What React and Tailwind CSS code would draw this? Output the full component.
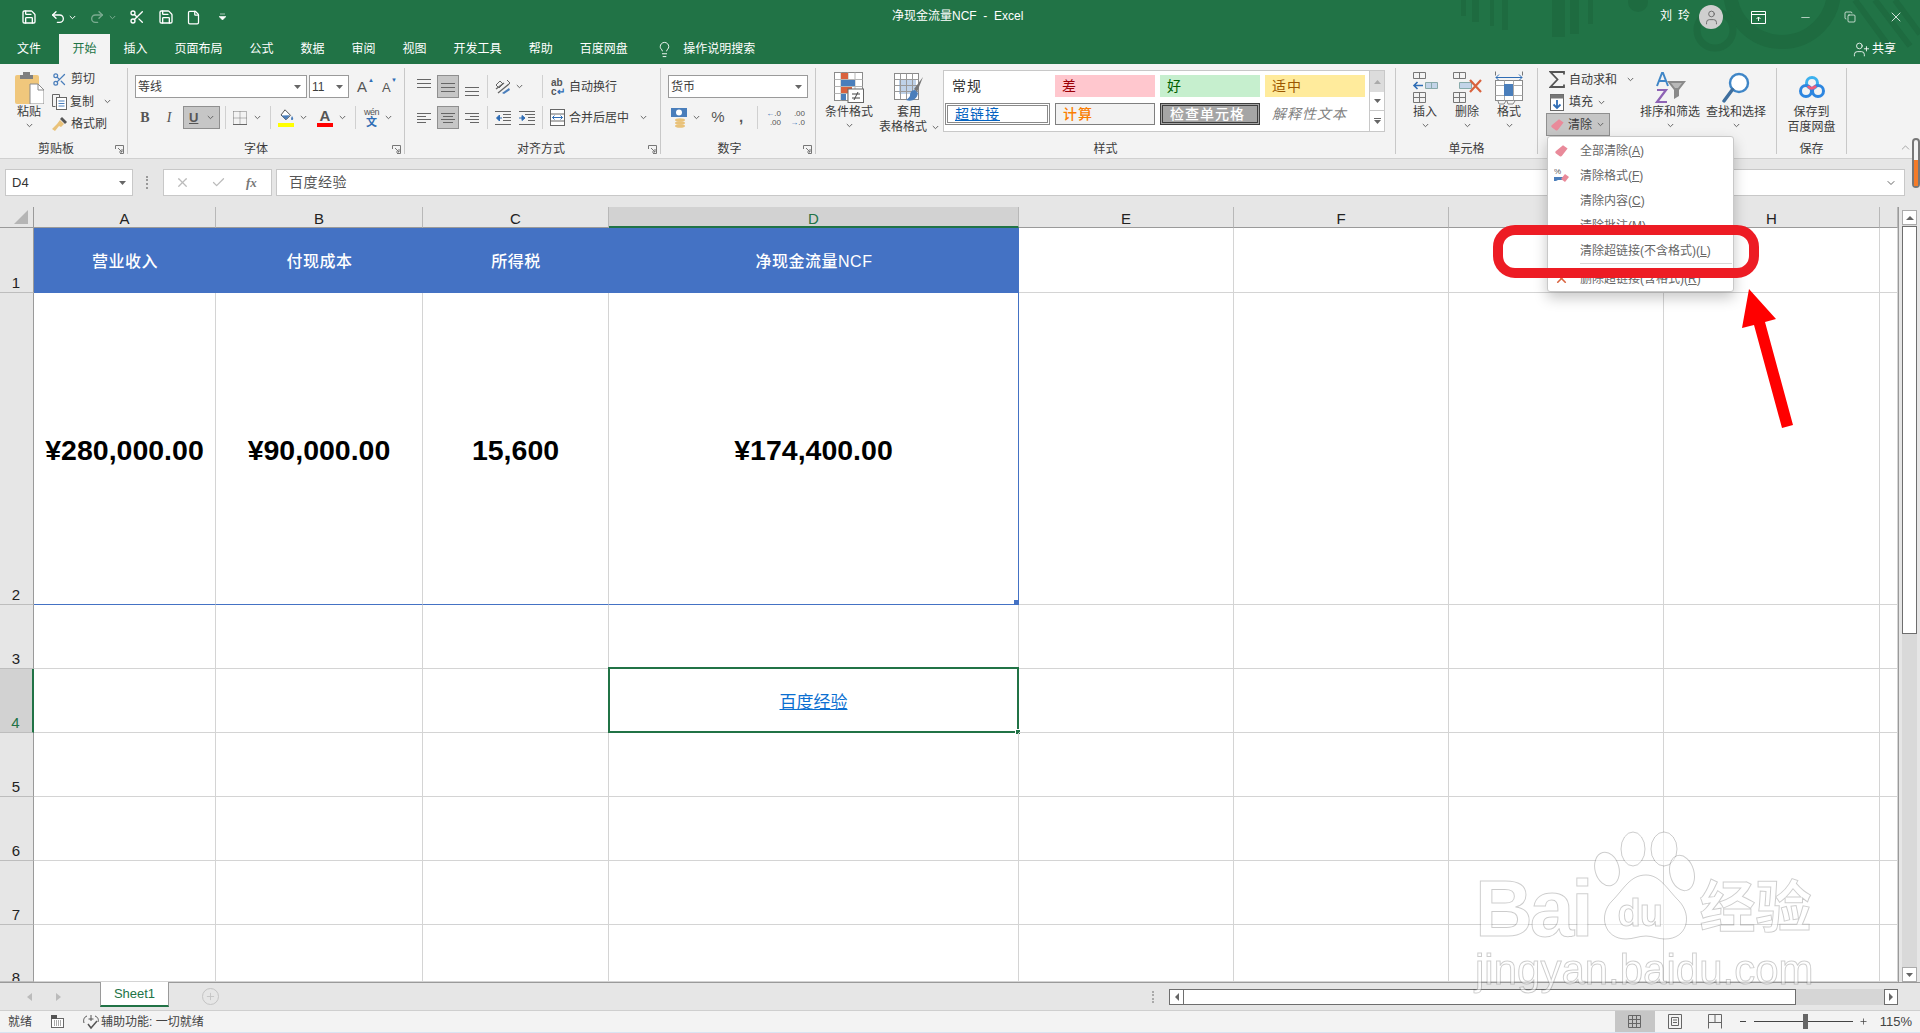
import { Save, Undo2, Redo2, Scissors, File, Lightbulb, X, Check, Minus, UserPlus, User, Copy, Plus, ChevronUp, ChevronDown } from 'lucide-react';

const Chev = ({ className = '' }) => (
  <svg width="7" height="5" viewBox="0 0 7 5" className={`shrink-0 ${className}`}>
    <path d="M.8 1l2.7 2.7L6.2 1" fill="none" stroke="#666" strokeWidth="1" />
  </svg>
);

const Caret = ({ className = '' }) => (
  <svg width="7" height="4" viewBox="0 0 7 4" className={`shrink-0 ${className}`}>
    <path d="M0 0h7L3.5 4z" fill="#666" />
  </svg>
);

const Lines = ({ rows, className = '' }) => (
  <svg width="14" height="14" viewBox="0 0 14 14" className={`shrink-0 ${className}`}>
    {rows.map(([x1, x2, y]) => (
      <path key={y} d={`M${x1} ${y}.5H${x2}`} stroke="#666" strokeWidth="1" />
    ))}
  </svg>
);

const Eraser = ({ className = '' }) => (
  <svg width="15" height="14" viewBox="0 0 15 14" className={`shrink-0 ${className}`}>
    <path d="M9 1.2l4.6 3.4-5.6 7.2c-.6.8-1.4.9-2.2.4L2 9.4c-.8-.6-.9-1.4-.3-2.2z" fill="#e98a9a" />
  </svg>
);

const Launcher = () => (
  <svg width="9" height="9" viewBox="0 0 9 9" className="absolute right-[3px] bottom-[0px]">
    <path d="M.5 4V.5h8v8H5M3 3l4 4M7 4v3H4" fill="none" stroke="#777" strokeWidth="1" />
  </svg>
);

const Group = ({ className, labelClass = '', label, launcher, children }) => (
  <div className={`relative h-[86px] shrink-0 flex flex-col border-r border-[#c8c8c8] ${className}`}>
    <div className="h-[73px] shrink-0">{children}</div>
    <div className={`h-[13px] leading-[17px] text-center ${labelClass}`}>{label}</div>
    {launcher && <Launcher />}
  </div>
);

const Large = ({ className = '', icon, lines, chevron = true }) => (
  <div className={`flex flex-col items-center shrink-0 ${className}`}>
    <div className="h-[37px] flex items-center justify-center pt-[2px]">{icon}</div>
    {lines.map((l) => (
      <span key={l} className="leading-[15px] whitespace-nowrap">{l}</span>
    ))}
    {chevron && <Chev className="mt-[3px]" />}
  </div>
);

const Sep = ({ className = '' }) => <div className={`w-px h-[23px] bg-[#d0d0d0] shrink-0 ${className}`} />;

const Select = ({ className, children }) => (
  <div className={`h-[23px] bg-white border border-[#9a9a9a] flex items-center justify-between pl-[2px] pr-[5px] shrink-0 ${className}`}>
    <span className="text-[12px]">{children}</span>
    <Caret />
  </div>
);

const PasteIcon = () => (
  <svg width="29" height="32" viewBox="0 0 29 32">
    <rect x="0" y="3" width="24" height="29" rx="2" fill="#f0c77c" />
    <path d="M8 3V0h7v3h3v4H5V3z" fill="#7f7f7f" />
    <path d="M15 12h8l6 6v14H15z" fill="#fff" stroke="#8a8a8a" />
    <path d="M23 12v6h6" fill="none" stroke="#8a8a8a" />
  </svg>
);

const CopyIcon = () => (
  <svg width="15" height="16" viewBox="0 0 15 16">
    <path d="M.5.5h7v3M.5.5v12h3" fill="none" stroke="#666" />
    <rect x="4.5" y="3.5" width="10" height="12" fill="#fff" stroke="#666" />
    <path d="M6.5 7h6M6.5 9.5h6M6.5 12h6" stroke="#4a7ebb" />
  </svg>
);

const Brush = () => (
  <svg width="16" height="16" viewBox="0 0 16 16">
    <path d="M10 1l5 5-2 2-5-5z" fill="#555" />
    <path d="M8 4l4 4-3 3-2-1-4 5-3-2 5-5z" fill="#e9c27a" />
  </svg>
);

const BorderIcon = () => (
  <svg width="14" height="14" viewBox="0 0 14 14">
    <path d="M.5.5h13v13M.5.5v13M7 .5v13M.5 7h13" fill="none" stroke="#777" strokeDasharray="1 1" />
    <path d="M0 13.5h14" stroke="#666" />
  </svg>
);

const FillIcon = () => (
  <div className="w-[16px] flex flex-col items-center">
    <svg width="15" height="13" viewBox="0 0 15 13">
      <path d="M6 .8l5.5 5.5-4.5 4.5L2 6z" fill="#fff" stroke="#555" />
      <path d="M2.5 6.5l8.5-.2-4 4.5z" fill="#4a7ebb" />
      <path d="M13 7c1 1.6 1.6 2.5 1 3.5s-2 .6-2-.6c0-.9.5-1.8 1-2.9z" fill="#4a7ebb" />
    </svg>
    <div className="w-[16px] h-[4px] bg-[#ffff00] mt-[1px]" />
  </div>
);

const FontColor = () => (
  <div className="w-[16px] flex flex-col items-center">
    <span className="font-bold text-[15px] leading-[13px] text-[#555]">A</span>
    <div className="w-[16px] h-[4px] bg-[#ff0000] mt-[1px]" />
  </div>
);

const Wen = () => (
  <div className="w-[15px] flex flex-col items-center leading-none">
    <span className="text-[9px] tracking-tighter text-[#555]">wén</span>
    <span className="text-[11px] text-[#2f6db5] font-bold">文</span>
  </div>
);

const Orient = () => (
  <svg width="17" height="16" viewBox="0 0 17 16">
    <path d="M1 10l8-6M3 14l11-9" stroke="#666" strokeWidth="1.3" />
    <path d="M12 1l3 3-3 3M1 6l4-4 3 3-4 4z" fill="none" stroke="#666" />
    <path d="M7 14l7-5 1 2-6 4z" fill="#4a7ebb" />
  </svg>
);

const WrapIcon = () => (
  <div className="w-[14px] leading-[9px] text-[10px] text-[#555] font-semibold">
    ab<br />c<span className="text-[#2f6db5]">↵</span>
  </div>
);

const IndentIcon = ({ flip }) => (
  <svg width="16" height="14" viewBox="0 0 16 14" className="shrink-0">
    <path d={flip ? 'M6 3.5h10M9 6.5h7M9 9.5h7M0 .5h16M0 13.5h16' : 'M0 .5h16M0 13.5h16M8 3.5h8M8 6.5h8M8 9.5h8'} stroke="#666" />
    <path d={flip ? 'M0 7h5M3 4.5L6 7l-3 2.5z' : 'M2 7h5M4.5 4L1.5 7l3 3z'} fill="#2f6db5" stroke="#2f6db5" />
  </svg>
);

const MergeIcon = () => (
  <svg width="15" height="17" viewBox="0 0 15 17" className="shrink-0">
    <rect x=".5" y=".5" width="14" height="16" fill="#fff" stroke="#666" />
    <path d="M.5 5h14M.5 12h14" stroke="#666" />
    <path d="M2.5 8.5h10M4.5 6.5l-2 2 2 2M10.5 6.5l2 2-2 2" fill="none" stroke="#2f6db5" />
  </svg>
);

const CurrencyIcon = () => (
  <svg width="17" height="20" viewBox="0 0 17 20" className="shrink-0">
    <rect x="0" y="0" width="16" height="9" fill="#4a7ebb" />
    <circle cx="8" cy="4.5" r="3" fill="#fff" />
    <ellipse cx="9" cy="12" rx="5" ry="1.8" fill="#e9c27a" />
    <ellipse cx="9" cy="15" rx="5" ry="1.8" fill="#e9c27a" />
    <ellipse cx="9" cy="18" rx="5" ry="1.8" fill="#e9c27a" />
  </svg>
);

const DecUp = () => (
  <div className="w-[16px] text-[8px] leading-[9px] text-right text-[#555]">
    <div><span className="text-[#2f6db5] font-bold">←</span>.0</div>
    <div>.00</div>
  </div>
);

const DecDown = () => (
  <div className="w-[16px] text-[8px] leading-[9px] text-right text-[#555]">
    <div>.00</div>
    <div><span className="text-[#2f6db5] font-bold">→</span>.0</div>
  </div>
);

const CondIcon = () => (
  <svg width="30" height="31" viewBox="0 0 30 31">
    <rect x=".5" y=".5" width="28" height="28" fill="#fff" stroke="#8a8a8a" />
    <path d="M7 .5v28M14 .5v28M21 .5v28M.5 7.5h28M.5 14.5h28M.5 21.5h28" stroke="#b5b5b5" />
    <rect x="7" y="1" width="7" height="6" fill="#d9623d" />
    <rect x="7" y="8" width="14" height="6" fill="#4a7ebb" />
    <rect x="7" y="15" width="11" height="6" fill="#d9623d" />
    <rect x="7" y="22" width="5" height="6" fill="#4a7ebb" />
    <rect x="14" y="17" width="15.5" height="13.5" fill="#fff" stroke="#666" />
    <path d="M18 22h8M18 26h8M24 20l-4 8" stroke="#444" fill="none" />
  </svg>
);

const TableIcon = () => (
  <svg width="30" height="30" viewBox="0 0 30 30">
    <rect x=".5" y=".5" width="24" height="26" fill="#fff" stroke="#8a8a8a" />
    <rect x="5" y="6" width="17" height="15" fill="#bfd2e8" />
    <path d="M6.5.5v26M12.5.5v26M18.5.5v26M.5 6.5h24M.5 12.5h24M.5 18.5h24" stroke="#9a9a9a" />
    <path d="M29 4L20 16l3 3z" fill="#777" />
    <path d="M21 17c-4 0-5 3-5 6-1 2-3 3-4 4 5 2 11 0 12-7z" fill="#4a7ebb" />
  </svg>
);

const InsertIcon = () => (
  <svg width="26" height="31" viewBox="0 0 26 31">
    <path d="M1.5.5h12v6h-12zM7.5.5v6" fill="none" stroke="#777" />
    <path d="M13.5 10.5h12v6h-12z" fill="#c3d4e8" stroke="#8aa" />
    <path d="M19.5 10.5v6" stroke="#8aa" />
    <path d="M2 13.5h9M5.5 10L2 13.5 5.5 17" fill="none" stroke="#2f6db5" strokeWidth="1.6" />
    <path d="M1.5 20.5h12v10h-12zM7.5 20.5v10M1.5 25.5h12" fill="none" stroke="#777" />
  </svg>
);

const DeleteIcon = () => (
  <svg width="31" height="31" viewBox="0 0 31 31">
    <path d="M1.5.5h12v6h-12zM7.5.5v6" fill="none" stroke="#777" />
    <path d="M7.5 10.5h12v6h-12z" fill="#c3d4e8" stroke="#8aa" />
    <path d="M1.5 20.5h12v10h-12zM7.5 20.5v10M1.5 25.5h12" fill="none" stroke="#777" />
    <path d="M18 8l11 12M29 8L18 20" stroke="#d9623d" strokeWidth="2.2" fill="none" />
  </svg>
);

const FormatIcon = () => (
  <svg width="28" height="34" viewBox="0 0 28 34">
    <path d="M1 6.5h26M4 3.5L1 6.5l3 3M24 3.5l3 3-3 3" fill="none" stroke="#2f6db5" />
    <path d="M.5 .5v4M27.5 .5v4" stroke="#777" />
    <rect x=".5" y="9.5" width="27" height="20" fill="#fff" stroke="#8a8a8a" />
    <path d="M9.5 9.5v20M18.5 9.5v20M.5 14.5h27M.5 24.5h27" stroke="#aaa" />
    <rect x="9" y="13" width="9" height="12" fill="#4a7ebb" />
    <path d="M3 30l1 3h5l2-3M12 30l1 3h5l2-3" fill="none" stroke="#888" />
  </svg>
);

const SigmaIcon = () => (
  <svg width="16" height="17" viewBox="0 0 16 17" className="shrink-0">
    <path d="M15 3.5V1H1.5l7 7.5-7 7.5H15v-2.5" fill="none" stroke="#555" strokeWidth="1.8" />
  </svg>
);

const FillDown = () => (
  <svg width="14" height="17" viewBox="0 0 14 17" className="shrink-0">
    <rect x=".5" y=".5" width="13" height="16" fill="#fff" stroke="#666" />
    <rect x=".5" y=".5" width="13" height="4" fill="#777" />
    <path d="M7 6v8M3.5 10.5L7 14l3.5-3.5" fill="none" stroke="#2f6db5" strokeWidth="1.8" />
  </svg>
);

const SortIcon = () => (
  <svg width="32" height="33" viewBox="0 0 32 33">
    <path d="M3 15L8 2h1l5 13M5 10h7" fill="none" stroke="#3f86c7" strokeWidth="2" />
    <path d="M3 19h9L3 31h10" fill="none" stroke="#8e63b5" strokeWidth="2.2" />
    <path d="M13 10h19l-7 9v6l-5 3v-9z" fill="#8a8a8a" />
    <path d="M17 12h11l-4 5h-3z" fill="#b8b8b8" />
  </svg>
);

const FindIcon = () => (
  <svg width="28" height="32" viewBox="0 0 28 32">
    <circle cx="17" cy="11" r="9" fill="#fff" stroke="#3f86c7" strokeWidth="2.4" />
    <path d="M10.5 17.5L2 29" stroke="#3f6f9e" strokeWidth="3.4" strokeLinecap="round" />
  </svg>
);

const BaiduDisk = () => (
  <svg width="26" height="23" viewBox="0 0 26 23">
    <circle cx="13" cy="7" r="5.5" fill="none" stroke="#3db1ee" strokeWidth="3" />
    <circle cx="7" cy="15" r="5.5" fill="none" stroke="#2d86e0" strokeWidth="3" />
    <circle cx="19" cy="15" r="5.5" fill="none" stroke="#2d86e0" strokeWidth="3" />
    <path d="M9 10c2 3 5 3 8 0" fill="none" stroke="#ef5b7b" strokeWidth="3" />
  </svg>
);

const TitleBar = () => (
  <div className="relative h-[34px] shrink-0 flex items-center text-white">
    <svg width="460" height="64" viewBox="0 0 460 64" className="absolute left-[1460px] top-0">
      <g fill="#1e6b40">
        <rect x="1" width="5" height="16" />
        <rect x="12" width="7" height="22" />
        <rect x="30" width="4" height="26" />
        <rect x="42" width="6" height="30" />
        <rect x="92" width="13" height="37" />
        <rect x="110" width="9" height="34" />
        <rect x="128" width="5" height="24" />
        <circle cx="178" cy="2" r="10" />
      </g>
      <g fill="none" stroke="#1e6b40">
        <circle cx="322" cy="-10" r="52" strokeWidth="14" />
        <circle cx="255" cy="30" r="18" strokeWidth="7" />
        <path d="M395 0l38 52M415 0l35 46M435 0l25 34" strokeWidth="6" />
      </g>
    </svg>
    <div className="relative w-[892px] shrink-0 flex items-center">
      <Save size={16} className="ml-[21px]" />
      <Undo2 size={16} className="ml-[13px]" />
      <svg width="7" height="5" viewBox="0 0 7 5" className="ml-[3px]"><path d="M.8 1l2.7 2.7L6.2 1" fill="none" stroke="#fff" /></svg>
      <Redo2 size={16} className="ml-[13px] opacity-40" />
      <svg width="7" height="5" viewBox="0 0 7 5" className="ml-[4px] opacity-40"><path d="M.8 1l2.7 2.7L6.2 1" fill="none" stroke="#fff" /></svg>
      <Scissors size={16} className="ml-[13px]" />
      <Save size={16} className="ml-[13px]" />
      <File size={15} className="ml-[12px]" />
      <svg width="7" height="8" viewBox="0 0 7 8" className="ml-[18px]"><path d="M1 1h5M0 3.5h7L3.5 7z" fill="#fff" stroke="#fff" strokeWidth=".6" /></svg>
    </div>
    <span className="relative text-[12px] pb-[3px]">净现金流量NCF&nbsp;&nbsp;-&nbsp;&nbsp;Excel</span>
    <div className="relative flex-1 flex items-center justify-end pr-[16px]">
      <span className="text-[12px] tracking-[6px] pb-[2px]">刘玲</span>
      <div className="ml-[3px] w-[24px] h-[24px] rounded-full bg-[#cfcfcf] flex items-center justify-center">
        <User size={17} className="text-[#666]" strokeWidth={1.3} />
      </div>
      <svg width="15" height="13" viewBox="0 0 15 13" className="ml-[28px]"><path d="M.5.5h14v12H.5zM.5 3.5h14M7.5 10V6M5.5 8l2-2 2 2" fill="none" stroke="#fff" /></svg>
      <Minus size={13} className="ml-[33px]" strokeWidth={1.2} />
      <Copy size={12} className="ml-[32px]" strokeWidth={1.4} />
      <X size={16} className="ml-[32px]" strokeWidth={1.2} />
    </div>
  </div>
);

const tabs = ['插入', '页面布局', '公式', '数据', '审阅', '视图', '开发工具', '帮助', '百度网盘'];

const TabRow = () => (
  <div className="relative h-[30px] shrink-0 flex items-stretch text-white">
    <div className="ml-[4px] px-[13px] leading-[30px] text-[12px]">文件</div>
    <div className="ml-[5px] w-[51px] text-center bg-[#f3f3f3] text-[#217346] leading-[30px] text-[12px]">开始</div>
    {tabs.map((t) => (
      <div key={t} className="px-[13.5px] leading-[30px] text-[12px]">{t}</div>
    ))}
    <div className="ml-[15px] flex items-center text-[12px]">
      <Lightbulb size={17} strokeWidth={1.3} />
      <span className="ml-[10px]">操作说明搜索</span>
    </div>
    <div className="ml-auto mr-[24px] flex items-center text-[12px]">
      <UserPlus size={17} strokeWidth={1.2} />
      <span className="ml-[2px]">共享</span>
    </div>
  </div>
);

const Style = ({ className, children }) => (
  <div className={`h-[22px] flex items-center pl-[7px] text-[14px] tracking-[1px] leading-none whitespace-nowrap ${className}`}>{children}</div>
);

const Ribbon = () => (
  <div className="h-[94px] shrink-0 bg-[#f3f3f3] flex items-start pt-[4px] text-[12px] text-[#3c3c3c]">
    <Group className="w-[128px]" labelClass="pr-[15px]" label="剪贴板" launcher>
      <div className="flex">
        <Large className="w-[52px] pl-[6px]" icon={<PasteIcon />} lines={['粘贴']} />
        <div className="flex flex-col">
          <div className="h-[22.5px] flex items-center"><Scissors size={15} className="text-[#4a7ebb] mt-[1px]" /><span className="ml-[4px]">剪切</span></div>
          <div className="h-[22.5px] flex items-center"><CopyIcon /><span className="ml-[3px]">复制</span><Chev className="ml-[10px]" /></div>
          <div className="h-[22.5px] flex items-center"><Brush /><span className="ml-[3px]">格式刷</span></div>
        </div>
      </div>
    </Group>

    <Group className="w-[277px]" labelClass="pr-[20px]" label="字体" launcher>
      <div className="flex items-center mt-[7px] h-[23px]">
        <Select className="ml-[7px] w-[172px]">等线</Select>
        <Select className="ml-[2px] w-[40px]">11</Select>
        <div className="ml-[8px] relative w-[13px] text-[15px] leading-none text-[#555]">A<span className="absolute -top-[2px] -right-[4px] text-[6px] text-[#2f6db5]">▲</span></div>
        <div className="ml-[12px] relative w-[12px] text-[13px] leading-none mt-[2px] text-[#555]">A<span className="absolute -top-[4px] -right-[3px] text-[6px] text-[#2f6db5]">▼</span></div>
      </div>
      <div className="flex items-center mt-[8px] h-[23px]">
        <span className="ml-[5px] w-[24px] text-center font-bold text-[14px] text-[#555] font-['Liberation_Serif',serif]">B</span>
        <span className="w-[24px] text-center italic text-[14px] text-[#555] font-['Liberation_Serif',serif]">I</span>
        <div className="ml-[2px] w-[37px] h-[23px] bg-[#c6c6c6] border border-[#8f8f8f] flex items-center justify-between px-[5px]">
          <span className="underline font-bold text-[13px] text-[#555]">U</span><Chev />
        </div>
        <Sep className="ml-[5px]" />
        <div className="ml-[7px]"><BorderIcon /></div>
        <Chev className="ml-[7px]" />
        <Sep className="ml-[9px]" />
        <div className="ml-[7px]"><FillIcon /></div>
        <Chev className="ml-[6px]" />
        <div className="ml-[10px]"><FontColor /></div>
        <Chev className="ml-[6px]" />
        <Sep className="ml-[9px]" />
        <div className="ml-[8px]"><Wen /></div>
        <Chev className="ml-[6px]" />
      </div>
    </Group>

    <Group className="w-[256px]" labelClass="pl-[17px]" label="对齐方式" launcher>
      <div className="flex items-center mt-[7px] h-[23px]">
        <Lines className="ml-[12px] -mt-[6px]" rows={[[0, 14, 2], [0, 14, 6], [0, 14, 10]]} />
        <div className="ml-[6px] w-[22px] h-[23px] bg-[#c6c6c6] border border-[#8f8f8f] flex items-center justify-center"><Lines rows={[[0, 14, 3], [0, 14, 7], [0, 14, 11]]} /></div>
        <Lines className="ml-[6px] mt-[6px]" rows={[[0, 14, 4], [0, 14, 8], [0, 14, 12]]} />
        <Sep className="ml-[8px]" />
        <div className="ml-[7px]"><Orient /></div>
        <Chev className="ml-[4px]" />
        <Sep className="ml-[19px]" />
        <div className="ml-[8px]"><WrapIcon /></div>
        <span className="ml-[4px]">自动换行</span>
      </div>
      <div className="flex items-center mt-[8px] h-[23px]">
        <Lines className="ml-[12px]" rows={[[0, 14, 2], [0, 9, 5], [0, 14, 8], [0, 9, 11]]} />
        <div className="ml-[6px] w-[22px] h-[23px] bg-[#c6c6c6] border border-[#8f8f8f] flex items-center justify-center"><Lines rows={[[0, 14, 2], [2, 12, 5], [0, 14, 8], [2, 12, 11]]} /></div>
        <Lines className="ml-[6px]" rows={[[0, 14, 2], [5, 14, 5], [0, 14, 8], [5, 14, 11]]} />
        <Sep className="ml-[8px]" />
        <div className="ml-[7px]"><IndentIcon /></div>
        <div className="ml-[8px]"><IndentIcon flip /></div>
        <Sep className="ml-[7px]" />
        <div className="ml-[7px]"><MergeIcon /></div>
        <span className="ml-[4px]">合并后居中</span>
        <Chev className="ml-[11px]" />
      </div>
    </Group>

    <Group className="w-[155px]" labelClass="pr-[17px]" label="数字" launcher>
      <div className="flex items-center mt-[7px] h-[23px]">
        <Select className="ml-[7px] w-[140px]">货币</Select>
      </div>
      <div className="flex items-center mt-[8px] h-[23px]">
        <div className="ml-[10px]"><CurrencyIcon /></div>
        <Chev className="ml-[5px]" />
        <span className="ml-[11px] w-[14px] text-center text-[15px] text-[#555]">%</span>
        <span className="ml-[9px] w-[14px] text-center text-[15px] font-bold text-[#555]">,</span>
        <Sep className="ml-[9px]" />
        <div className="ml-[7px]"><DecUp /></div>
        <div className="ml-[8px]"><DecDown /></div>
      </div>
    </Group>

    <Group className="w-[580px]" label="样式">
      <div className="flex">
        <Large className="ml-[3px] w-[60px]" icon={<CondIcon />} lines={['条件格式']} />
        <div className="w-[60px] flex flex-col items-center shrink-0">
          <div className="h-[37px] flex items-center justify-center pt-[2px]"><TableIcon /></div>
          <span className="leading-[15px]">套用</span>
          <div className="flex items-center leading-[15px] whitespace-nowrap">表格格式<Chev className="ml-[5px]" /></div>
        </div>
        <div className="ml-[4px] mt-[2px] w-[442px] h-[62px] flex bg-white border border-[#c8c8c8]">
          <div className="flex-1 pt-[4px] pl-[1px] grid grid-cols-[105px_100px_100px_100px] gap-x-[5px] gap-y-[6px] content-start">
            <Style className="text-[#333]">常规</Style>
            <Style className="bg-[#ffc7ce] text-[#9c0006]">差</Style>
            <Style className="bg-[#c6efce] text-[#006100]">好</Style>
            <Style className="bg-[#ffeb9c] text-[#9c5700]">适中</Style>
            <Style className="border-[3px] border-double border-[#8a8a8a] text-[#0563c1] underline">超链接</Style>
            <Style className="bg-[#f2f2f2] border border-[#7f7f7f] text-[#fa7d00] font-medium">计算</Style>
            <Style className="bg-[#a5a5a5] border-[3px] border-double border-[#3f3f3f] text-white font-medium">检查单元格</Style>
            <Style className="italic text-[#7f7f7f]">解释性文本</Style>
          </div>
          <div className="w-[15px] shrink-0 flex flex-col border-l border-[#c8c8c8]">
            <div className="h-[21px] bg-[#dcdcdc] flex items-center justify-center"><svg width="7" height="4" viewBox="0 0 7 4"><path d="M0 4h7L3.5 0z" fill="#aaa" /></svg></div>
            <div className="h-[19px] flex items-center justify-center border-b border-[#c8c8c8]"><Caret /></div>
            <div className="flex-1 flex flex-col items-center justify-center"><div className="w-[7px] h-px bg-[#666] mb-[1px]" /><Caret /></div>
          </div>
        </div>
      </div>
    </Group>

    <Group className="w-[142px]" label="单元格">
      <div className="flex pl-[8px]">
        <Large className="w-[42px]" icon={<InsertIcon />} lines={['插入']} />
        <Large className="w-[42px]" icon={<DeleteIcon />} lines={['删除']} />
        <Large className="w-[42px]" icon={<FormatIcon />} lines={['格式']} />
      </div>
    </Group>

    <Group className="w-[239px]" label="编辑">
      <div className="flex pl-[8px]">
        <div className="w-[91px] flex flex-col shrink-0">
          <div className="h-[23px] flex items-center pl-[3px]"><SigmaIcon /><span className="ml-[4px]">自动求和</span><Chev className="ml-[10px]" /></div>
          <div className="h-[22px] flex items-center pl-[4px]"><FillDown /><span className="ml-[5px]">填充</span><Chev className="ml-[5px]" /></div>
          <div className="w-[64px] h-[23px] flex items-center pl-[3px] bg-[#c6c6c6] border border-[#8f8f8f]"><Eraser /><span className="ml-[3px]">清除</span><Chev className="ml-[5px]" /></div>
        </div>
        <Large className="w-[66px]" icon={<SortIcon />} lines={['排序和筛选']} />
        <Large className="w-[66px]" icon={<FindIcon />} lines={['查找和选择']} />
      </div>
    </Group>

    <Group className="w-[70px]" label="保存">
      <Large className="w-[69px]" icon={<BaiduDisk />} lines={['保存到', '百度网盘']} chevron={false} />
    </Group>

    <div className="flex-1 h-[86px] flex items-end justify-end pr-[8px]">
      <ChevronUp size={13} strokeWidth={1} className="text-[#666]" />
    </div>
  </div>
);

const FormulaBar = () => (
  <div className="h-[49px] shrink-0 bg-[#e6e6e6] border-t border-[#d0d0d0] flex items-start pt-[10px]">
    <div className="ml-[5px] w-[128px] h-[27px] bg-white border border-[#c8c8c8] flex items-center justify-between pl-[6px] pr-[6px] text-[13px] text-[#333]">
      D4<Caret />
    </div>
    <div className="ml-[13px] w-[2px] h-[13px] mt-[7px] border-l-2 border-dotted border-[#999]" />
    <div className="ml-[15px] w-[109px] h-[27px] bg-white border border-[#c8c8c8] flex items-center text-[#bbb]">
      <X size={15} className="ml-[11px]" />
      <Check size={15} className="ml-[21px]" />
      <span className="ml-[20px] italic font-bold text-[13px] text-[#777] font-['Liberation_Serif',serif]">fx</span>
    </div>
    <div className="ml-[4px] w-[1629px] h-[27px] bg-white border border-[#c8c8c8] flex items-center justify-between pl-[12px] pr-[7px] text-[14px] tracking-[.5px] text-[#555]">
      百度经验
      <ChevronDown size={12} className="text-[#666]" />
    </div>
  </div>
);

const cols = ['A', 'B', 'C', 'D', 'E', 'F', 'G', 'H', ''];
const headRow = ['营业收入', '付现成本', '所得税', '净现金流量NCF'];
const valueRow = ['¥280,000.00', '¥90,000.00', '15,600', '¥174,400.00'];

const RowHead = ({ n, active }) => (
  <div className={`flex justify-center pr-[1px] overflow-hidden text-[15px] leading-[18px] border-b border-[#bdbdbd] ${n === 8 ? 'items-start pt-[44px]' : 'items-end'} ${active ? 'bg-[#d2d2d2] text-[#217346] border-r-2 border-r-[#217346]' : 'bg-[#e6e6e6] text-[#222] border-r border-r-[#9a9a9a]'}`}>
    {n}
  </div>
);

const Cell = ({ className = '', children }) => (
  <div className={`relative border-r border-b border-[#d4d4d4] flex items-center justify-center ${className}`}>{children}</div>
);

const Sheet = () => (
  <div className="flex flex-1 min-h-0">
    <div className="w-[1898px] shrink-0 grid grid-cols-[34px_182px_207px_186px_410px_215px_215px_215px_216px_18px] grid-rows-[21px_65px_312px_64px_64px_64px_64px_64px_57px] overflow-hidden">
      <div className="bg-[#e6e6e6] border-r border-b border-[#9a9a9a] flex items-end justify-end pr-[5px] pb-[3px]">
        <svg width="14" height="14" viewBox="0 0 14 14"><path d="M14 0v14H0z" fill="#b5b5b5" /></svg>
      </div>
      {cols.map((c) => (
        <div key={c || 'I'} className={`text-center pt-[1px] leading-[21px] text-[15px] border-r border-[#b8b8b8] ${c === 'D' ? 'bg-[#d2d2d2] text-[#217346] border-b-2 border-b-[#217346]' : 'bg-[#e6e6e6] text-[#222] border-b border-b-[#9a9a9a]'}`}>{c}</div>
      ))}

      <RowHead n={1} />
      {headRow.map((t) => (
        <div key={t} className="bg-[#4472c4] text-white text-[16px] tracking-[.5px] font-medium flex items-center justify-center pt-[3px]">{t}</div>
      ))}
      {[0, 1, 2, 3, 4].map((i) => <Cell key={i} />)}

      <RowHead n={2} />
      {valueRow.map((t, i) => (
        <Cell key={t} className={`pt-[3px] border-b-[#4472c4] ${i === 3 ? 'border-r-[#4472c4]' : ''}`}>
          <span className="font-bold text-[28.5px] text-black leading-none">{t}</span>
          {i === 3 && <div className="absolute right-0 bottom-0 w-[4px] h-[4px] bg-[#4472c4]" />}
        </Cell>
      ))}
      {[0, 1, 2, 3, 4].map((i) => <Cell key={i} />)}

      {[3, 4, 5, 6, 7, 8].map((r) => (
        <div key={r} className="contents">
          <RowHead n={r} active={r === 4} />
          {cols.map((c) => (
            <Cell key={c || 'I'} className={r === 4 && c === 'D' ? 'pt-[4px]' : ''}>
              {r === 4 && c === 'D' && (
                <>
                  <span className="text-[#0b6fd1] underline text-[17px]">百度经验</span>
                  <div className="absolute -left-[1px] -top-[2px] -right-[1px] -bottom-[1px] border-2 border-[#217346]" />
                  <div className="absolute -right-[3px] -bottom-[3px] w-[6px] h-[6px] bg-[#217346] border border-white" />
                </>
              )}
            </Cell>
          ))}
        </div>
      ))}
    </div>

    <div className="flex-1 bg-[#e6e6e6] border-l border-[#9a9a9a] pl-[3px] pr-[3px] flex flex-col">
      <div className="h-[3px] shrink-0" />
      <div className="flex-1 bg-[#d9d9d9] flex flex-col">
        <div className="h-[15px] bg-white border border-[#ababab] flex items-center justify-center shrink-0">
          <svg width="8" height="4" viewBox="0 0 8 4"><path d="M0 4h8L4 0z" fill="#666" /></svg>
        </div>
        <div className="h-[408px] mt-[1px] bg-white border border-[#6e6e6e] shrink-0" />
        <div className="mt-auto h-[15px] bg-white border border-[#ababab] flex items-center justify-center shrink-0">
          <Caret />
        </div>
      </div>
    </div>
  </div>
);

const SheetTabs = () => (
  <div className="h-[28px] shrink-0 bg-[#e6e6e6] border-t border-[#9a9a9a] flex items-start">
    <svg width="5" height="8" viewBox="0 0 5 8" className="ml-[27px] mt-[10px]"><path d="M5 0v8L0 4z" fill="#bbb" /></svg>
    <svg width="5" height="8" viewBox="0 0 5 8" className="ml-[24px] mt-[10px]"><path d="M0 0v8l5-4z" fill="#bbb" /></svg>
    <div className="ml-[39px] -mt-px w-[69px] h-[25px] bg-white border-x border-[#9a9a9a] border-b-2 border-b-[#217346] text-center text-[13px] leading-[24px] text-[#217346]">Sheet1</div>
    <div className="ml-[33px] mt-[5px] w-[17px] h-[17px] rounded-full border border-[#c4c4c4] flex items-center justify-center">
      <Plus size={11} className="text-[#c4c4c4]" />
    </div>
    <div className="ml-[933px] mt-[8px] w-[2px] h-[12px] border-l-2 border-dotted border-[#aaa]" />
    <div className="ml-[15px] mt-[6px] w-[729px] h-[16px] flex bg-[#d6d6d6]">
      <div className="w-[15px] bg-white border border-[#6e6e6e] flex items-center justify-center shrink-0">
        <svg width="4" height="8" viewBox="0 0 4 8"><path d="M4 0v8L0 4z" fill="#666" /></svg>
      </div>
      <div className="w-[612px] bg-white border border-l-0 border-[#6e6e6e] shrink-0" />
      <div className="ml-auto w-[14px] bg-white border border-[#6e6e6e] flex items-center justify-center shrink-0">
        <svg width="4" height="8" viewBox="0 0 4 8"><path d="M0 0v8l4-4z" fill="#666" /></svg>
      </div>
    </div>
  </div>
);

const StatusBar = () => (
  <div className="h-[23px] shrink-0 bg-[#f3f3f3] border-t border-[#cfcfcf] border-b border-b-[#d8e4f2] flex items-center text-[11px] text-[#444]">
    <span className="ml-[8px] text-[12px]">就绪</span>
    <svg width="13" height="13" viewBox="0 0 13 13" className="ml-[19px]">
      <rect x=".5" y="3.5" width="12" height="9" fill="#fff" stroke="#666" />
      <rect x="0" y="0" width="6" height="4" fill="#555" />
      <path d="M3 6h7M3 8h7M3 10h7" stroke="#555" strokeDasharray="1 1" />
    </svg>
    <svg width="18" height="16" viewBox="0 0 18 16" className="ml-[18px]">
      <path d="M5 2C2 3 1 6 2 9M13 2c3 1 4 4 3 6" fill="none" stroke="#555" />
      <path d="M9 1v6M6.5 5h5" stroke="#555" />
      <path d="M6 10l3 4 6-7" fill="none" stroke="#555" strokeWidth="1.5" />
    </svg>
    <span className="ml-[1px] text-[12px]">辅助功能: 一切就绪</span>
    <div className="ml-auto flex items-center h-full">
      <div className="w-[40px] h-full bg-[#c6c6c6] flex items-center justify-center">
        <svg width="13" height="13" viewBox="0 0 13 13"><path d="M.5.5h12v12H.5zM4.5.5v12M8.5.5v12M.5 4.5h12M.5 8.5h12" fill="none" stroke="#666" /></svg>
      </div>
      <svg width="14" height="15" viewBox="0 0 14 15" className="ml-[13px]"><path d="M.5.5h13v14H.5zM3.5 3.5h7v8h-7zM5 6h4M5 8.5h4" fill="none" stroke="#666" /></svg>
      <svg width="14" height="15" viewBox="0 0 14 15" className="ml-[26px]"><path d="M.5 14.5V.5h13v14M7 .5v8M.5 8.5h13" fill="none" stroke="#666" /></svg>
      <div className="ml-[18px] w-[6px] h-px bg-[#444]" />
      <div className="ml-[8px] relative w-[99px] h-px bg-[#444]">
        <div className="absolute left-[49px] -top-[7px] w-[5px] h-[15px] bg-[#666]" />
      </div>
      <Plus size={9} className="ml-[6px] text-[#444]" />
      <span className="ml-[12px] mr-[8px] text-[13px]">115%</span>
    </div>
  </div>
);

const MenuItem = ({ icon, children }) => (
  <div className="h-[25px] flex items-center shrink-0">
    <div className="w-[32px] pl-[6px] shrink-0">{icon}</div>
    <span className="text-[12px] text-[#666] whitespace-nowrap">{children}</span>
  </div>
);

const ClearMenu = () => (
  <div className="absolute left-[1547px] top-[136px] w-[187px] h-[156px] pt-[1px] bg-white border border-[#c8c8c8] rounded-[3px] shadow-[0_6px_14px_rgba(0,0,0,0.22)] flex flex-col">
    <MenuItem icon={<Eraser />}>全部清除(<u>A</u>)</MenuItem>
    <MenuItem icon={
      <svg width="17" height="17" viewBox="0 0 17 17">
        <text x="0" y="7" fontSize="8" fill="#555">%</text>
        <path d="M0 10h9v3H4l-2 1H0z" fill="#4a7ebb" />
        <path d="M11 7l4 3-4 5-4-3z" fill="#e98a9a" />
      </svg>
    }>清除格式(<u>F</u>)</MenuItem>
    <MenuItem>清除内容(<u>C</u>)</MenuItem>
    <MenuItem>清除批注(<u>M</u>)</MenuItem>
    <MenuItem>清除超链接(不含格式)(<u>L</u>)</MenuItem>
    <div className="ml-[32px] mr-[1px] h-px bg-[#d8d8d8] shrink-0" />
    <div className="h-[2px] shrink-0" />
    <MenuItem icon={<X size={15} strokeWidth={2.6} className="text-[#d9623d]" />}>删除超链接(含格式)(<u>R</u>)</MenuItem>
  </div>
);

const RedMarks = () => (
  <>
    <div className="absolute left-[1493px] top-[225px] w-[266px] h-[53px] border-[10px] border-[#ed1c24] rounded-[22px]" />
    <svg width="60" height="145" viewBox="0 0 60 145" className="absolute left-[1740px] top-[285px]">
      <path d="M9 4L36 34 25 37 53 140 42 143 14 40 2 43z" fill="#ff0000" />
    </svg>
  </>
);

const Watermark = () => (
  <div className="absolute left-[1475px] top-[829px] w-[345px] text-white/50 [-webkit-text-stroke:1px_rgba(0,0,0,0.2)] blur-[0.4px] pointer-events-none">
    <div className="flex items-end h-[112px]">
      <span className="font-bold text-[80px] leading-[64px] tracking-[-3px]">Bai</span>
      <div className="relative w-[104px] h-[110px] shrink-0 ml-[3px]">
        <svg width="104" height="110" viewBox="0 0 104 110" className="absolute inset-0">
          <g fill="rgba(255,255,255,0.5)" stroke="rgba(0,0,0,0.2)" strokeWidth="1">
            <ellipse cx="13" cy="38" rx="12" ry="17" transform="rotate(-15 13 38)" />
            <ellipse cx="39" cy="18" rx="12" ry="17" />
            <ellipse cx="70" cy="18" rx="13" ry="17" />
            <ellipse cx="88" cy="42" rx="12" ry="18" transform="rotate(-15 88 42)" />
            <path d="M52 44c14 0 21 14 33 26 14 15 8 38-14 38-8 0-12-3-19-3s-13 3-20 3C10 108 4 84 18 70c12-12 18-26 34-26z" />
          </g>
        </svg>
        <span className="absolute left-[24px] top-[62px] text-[38px] leading-[40px] font-bold tracking-[-1px]">du</span>
      </div>
      <span className="font-bold text-[56px] leading-[66px] ml-[2px] whitespace-nowrap">经验</span>
    </div>
    <div className="text-[42px] leading-[48px] mt-[5px] whitespace-nowrap">jingyan.baidu.com</div>
  </div>
);

export default function App() {
  return (
    <div className="relative w-[1920px] h-[1033px] overflow-hidden flex flex-col bg-[#217346] font-['Liberation_Sans','Noto_Sans_CJK_SC',sans-serif]">
      <TitleBar />
      <TabRow />
      <Ribbon />
      <FormulaBar />
      <div className="flex-1 min-h-0 bg-white flex"><Sheet /></div>
      <SheetTabs />
      <StatusBar />

      <ClearMenu />
      <RedMarks />
      <Watermark />

      {/* scroll pill stuck on the right edge of the capture */}
      <div className="absolute left-[1912px] top-[138px] w-[8px] h-[50px] rounded-[4px] border-2 border-[#777] bg-[#f3f3f3] flex flex-col justify-end">
        <div className="h-[26px] bg-[#f47b28]" />
      </div>
    </div>
  );
}
